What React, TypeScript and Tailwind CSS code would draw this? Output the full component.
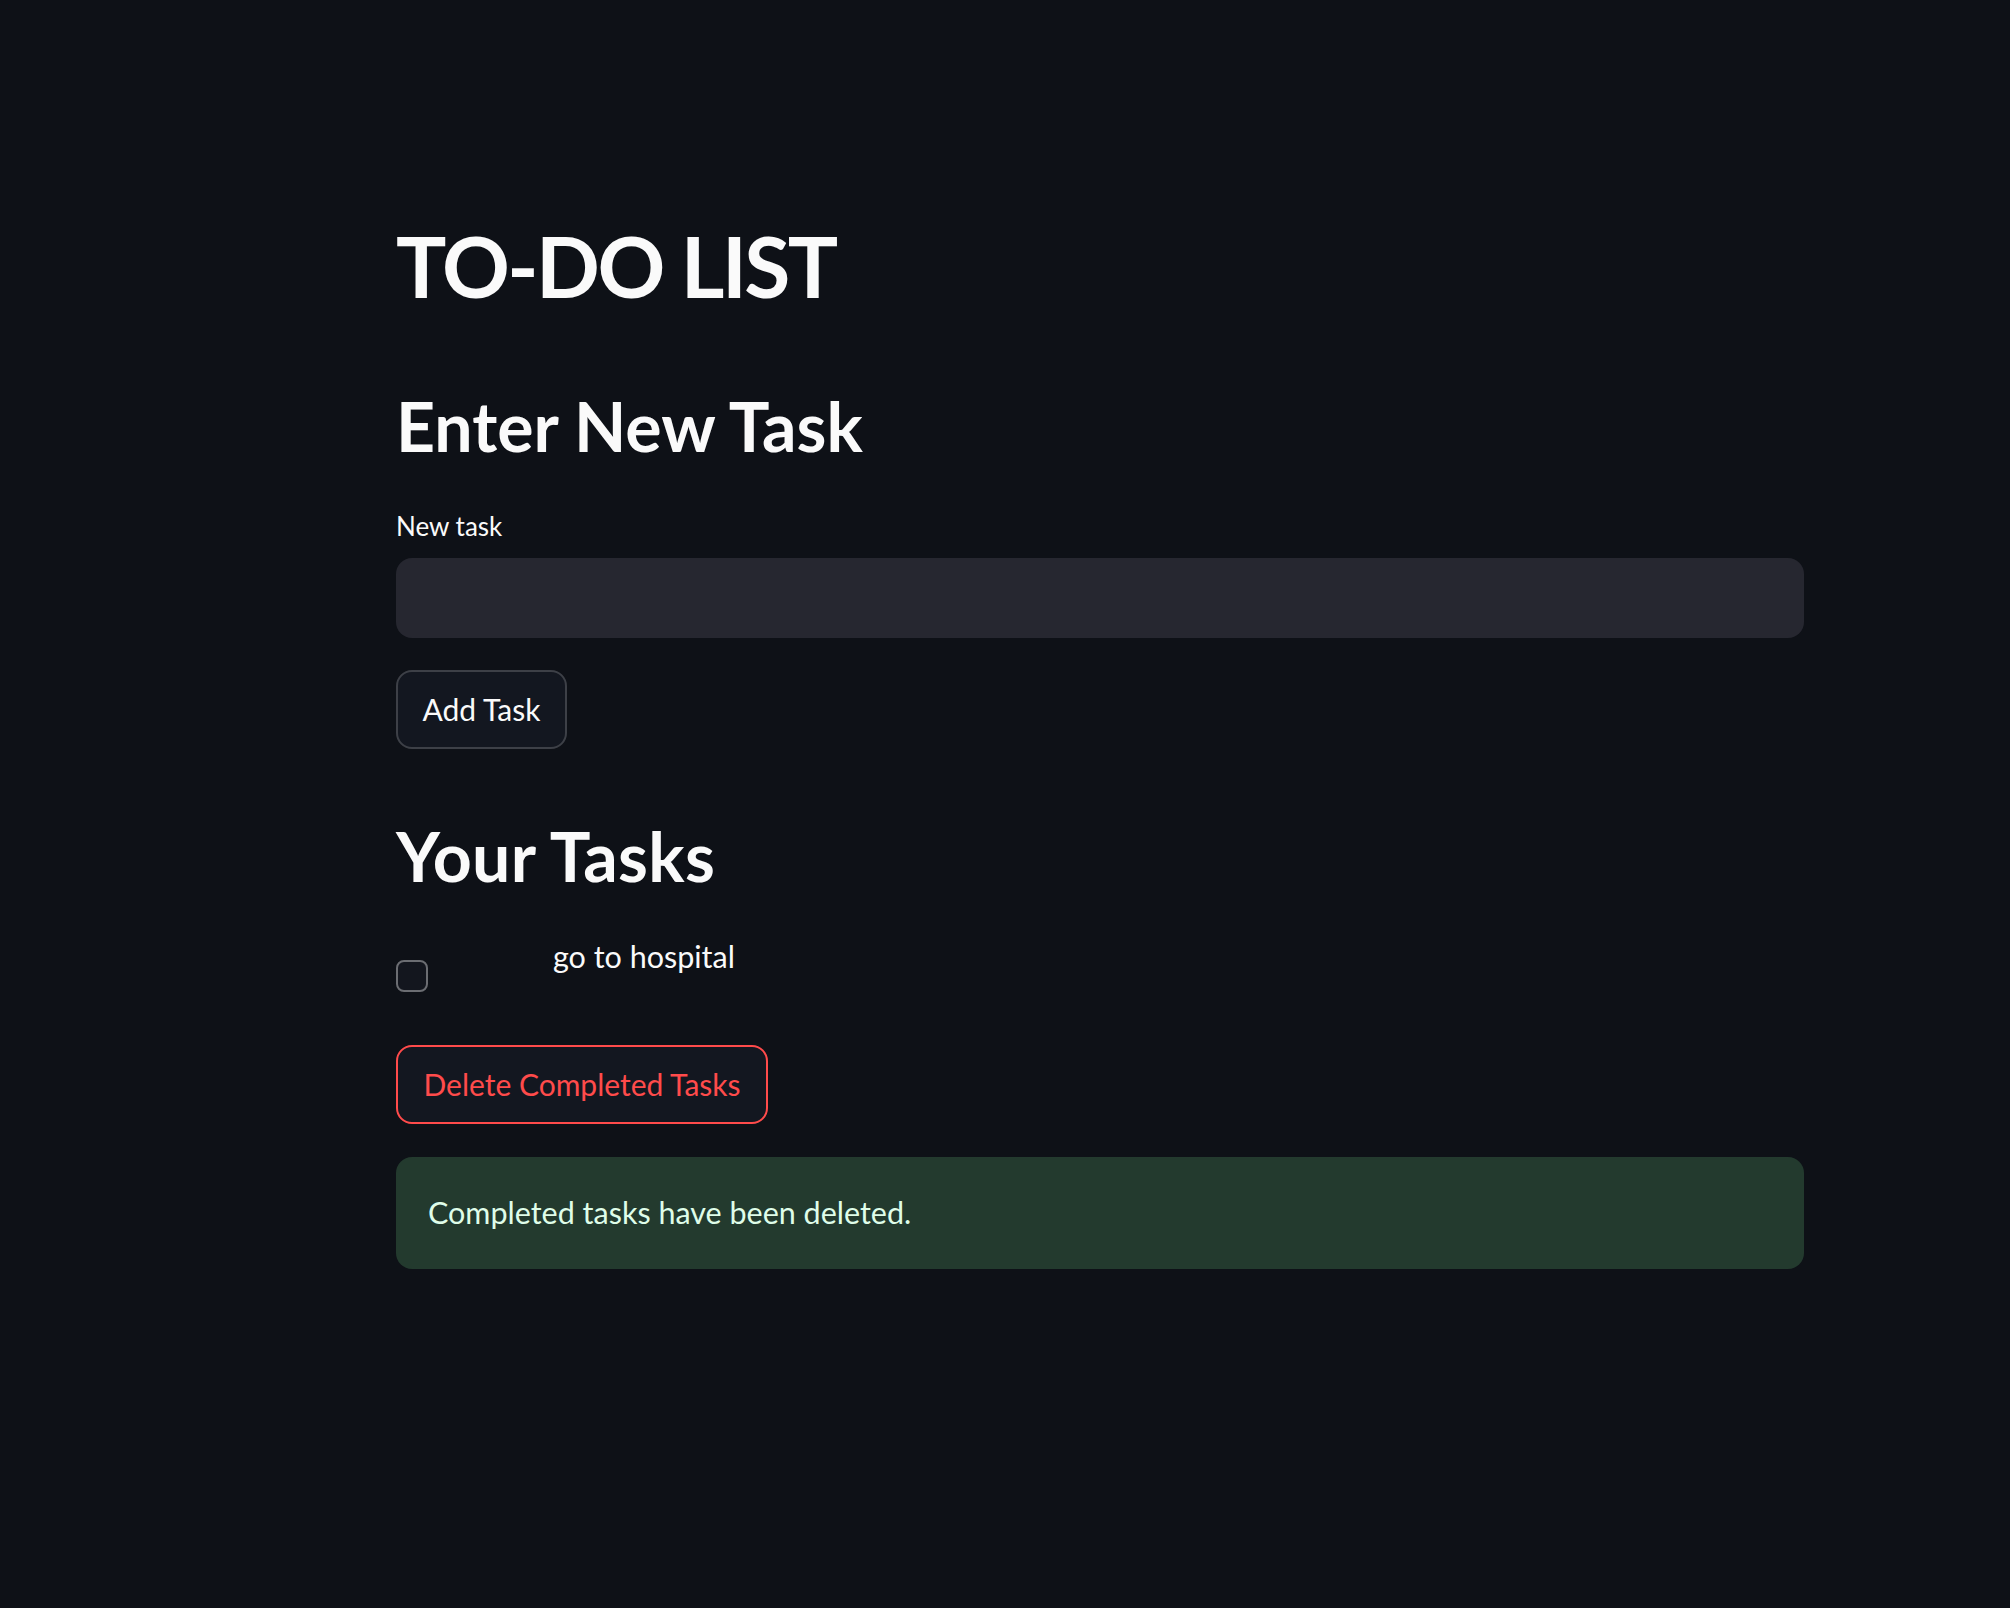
import React from "react";

export default function App() {
  const tasks = ["go to hospital"];

  return (
    <main className="min-h-screen w-full bg-[#0e1117] text-[#fafafa] font-['Lato',sans-serif]">
      <div className="w-[1408px] ml-[396px] pt-[216px] flex flex-col">
        {/* === TITLE === */}
        <h1 className="text-[84px] leading-[100px] font-bold tracking-[-2.5px]">TO-DO LIST</h1>

        {/* === NEW TASK === */}
        <h2 className="mt-[69px] text-[68px] leading-[82px] font-bold">Enter New Task</h2>
        <label className="mt-[44px] text-[26px] leading-[31px]">New task</label>
        <input
          type="text"
          className="mt-[16px] h-[80px] w-full rounded-[16px] bg-[#262730] px-6 text-[30px] outline-none"
        />
        <div className="mt-[32px]">
          <button className="h-[79px] w-[171px] rounded-[16px] border-2 border-[#3d4047] bg-[#131720] text-[30px] text-[#fafafa]">
            Add Task
          </button>
        </div>

        {/* === TASK LIST === */}
        <h2 className="mt-[66px] text-[68px] leading-[82px] font-bold tracking-[0.3px]">Your Tasks</h2>
        <div className="mt-[32px] flex flex-col">
          {tasks.map((t, i) => (
            <div key={i} className="flex items-start">
              <div className="w-[157px] pt-[31px]">
                <span className="block h-[32px] w-[32px] rounded-[8px] border-2 border-[#6b6d72] bg-[#13161e]" />
              </div>
              <p className="pt-[3px] text-[30.5px] leading-[48px]">{t}</p>
            </div>
          ))}
        </div>

        <div className="mt-[53px]">
          <button className="h-[79px] w-[372px] rounded-[16px] border-2 border-[#ff4b4b] bg-[#131720] text-[30px] text-[#ff4b4b]">
            Delete Completed Tasks
          </button>
        </div>

        {/* === MESSAGE === */}
        <div className="mt-[33px] h-[112px] w-full rounded-[16px] bg-[#233a2e] px-[32px] flex items-center">
          <p className="pb-[3px] text-[30.5px] leading-[48px] text-[#dffde9]">Completed tasks have been deleted.</p>
        </div>
      </div>
    </main>
  );
}
